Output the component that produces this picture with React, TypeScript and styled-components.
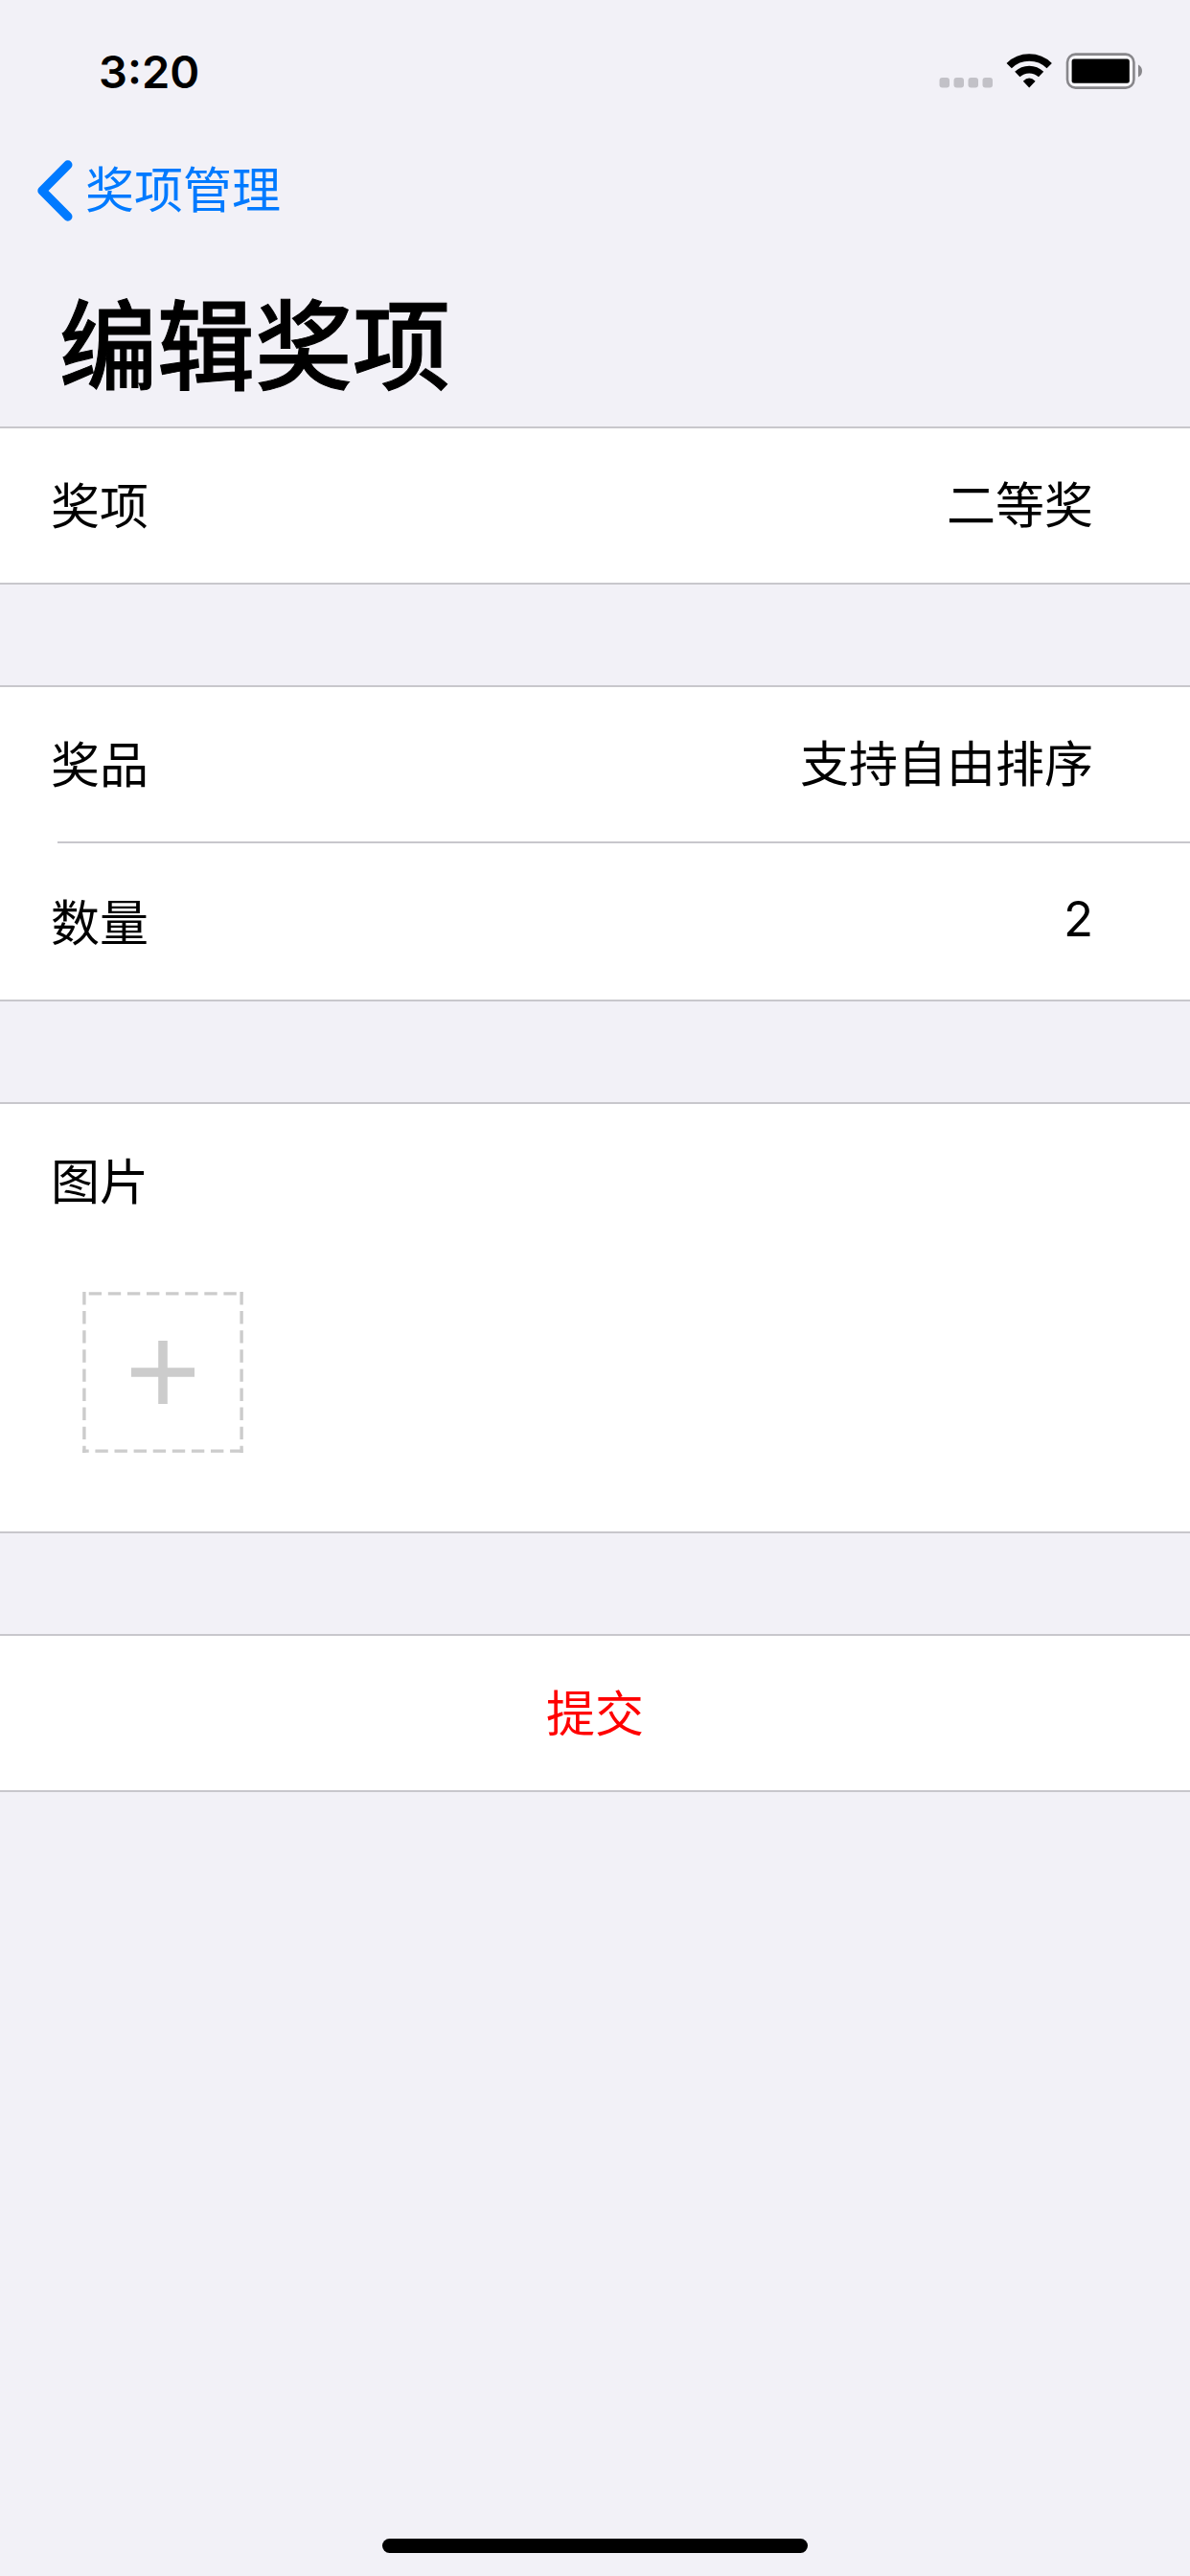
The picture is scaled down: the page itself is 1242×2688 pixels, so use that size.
import React, { useState } from "react";
import styled, { createGlobalStyle } from "styled-components";

const GlobalStyle = createGlobalStyle`
  *, *::before, *::after { box-sizing: border-box; }
  body {
    margin: 0;
    background: #f2f1f7;
    color: #000;
    font-family: Inter, "Noto Sans CJK SC", sans-serif;
    font-size: 51px;
    line-height: 72px;
  }
  button, input { font: inherit; color: inherit; }
`;

const Screen = styled.div`
  display: flex;
  flex-direction: column;
  min-height: 100vh;
`;

const StatusBar = styled.div`
  display: flex;
  align-items: center;
  justify-content: space-between;
  height: 132px;
  padding: 18px 49px 0 103px;
`;

const Time = styled.time`
  font-size: 47px;
  font-weight: 600;
`;

const StatusIcons = styled.svg`
  display: block;
  width: 216px;
  height: 40px;
`;

const NavBar = styled.nav`
  display: flex;
  align-items: center;
  height: 132px;
  padding: 2px 36px 0;
`;

const BackLink = styled.a`
  display: flex;
  align-items: center;
  gap: 11px;
  color: #007aff;
  text-decoration: none;
`;

const Chevron = styled.svg`
  display: block;
  width: 42px;
  height: 66px;
`;

const Title = styled.h1`
  margin: 0;
  padding: 26px 62px 11px;
  font-size: 102px;
  line-height: 144px;
  font-weight: 500;
  -webkit-text-stroke: 1px currentColor;
`;

const Form = styled.form`
  display: flex;
  flex-direction: column;
  gap: 105px;
`;

const Group = styled.section`
  border: solid #c8c7cc;
  border-width: 2px 0;
  background: #fff;
`;

const Row = styled.div`
  display: flex;
  align-items: center;
  height: 161px;
  padding: 2px 101px 0 53px;
`;

const Divider = styled.hr`
  height: 2px;
  margin: 0 0 2px 60px;
  border: 0;
  background: #c8c7cc;
`;

const Label = styled.label`
  flex: none;
`;

const RowTitle = styled.h2`
  margin: 0;
  font: inherit;
`;

const Input = styled.input`
  flex: 1;
  min-width: 0;
  height: 100px;
  padding: 0 0 10px;
  border: 0;
  outline: 0;
  background: transparent;
  text-align: right;
`;

const Pictures = styled.div`
  display: flex;
  padding: 35px 86px 82px;
`;

const AddButton = styled.button`
  width: 168px;
  height: 168px;
  padding: 0;
  border: 0;
  background: transparent;
  cursor: pointer;

  svg { display: block; }
`;

const SubmitButton = styled.button`
  display: block;
  width: 100%;
  height: 161px;
  padding: 2px 0 0;
  border: 0;
  background: transparent;
  color: #f00;
  cursor: pointer;
`;

const HomeArea = styled.footer`
  display: flex;
  justify-content: center;
  margin-top: auto;
  padding: 24px 0;
`;

const HomeIndicator = styled.div`
  width: 444px;
  height: 15px;
  border-radius: 8px;
  background: #000;
`;

function StatusGlyphs() {
  return (
    <StatusIcons viewBox="976 55 216 40" aria-hidden="true">
      {[979.5, 994.5, 1009.5, 1024.5].map((x) => (
        <rect key={x} x={x} y="81" width="10.5" height="10.5" rx="3" fill="#c2c1c7" />
      ))}
      <g fill="none" stroke="#000" strokeWidth="7.6">
        <path d="M1052.2 68.6A30 30 0 0 1 1094.2 68.6" />
        <path d="M1060.8 77.6A18 18 0 0 1 1085.6 77.6" />
      </g>
      <path d="M1073.2 91.4L1066.8 84.8Q1073.2 78.4 1079.6 84.8Z" fill="#000" />
      <rect x="1113" y="56.6" width="69.4" height="35" rx="8.5" fill="#fff" fillOpacity="0.4" stroke="#88878b" strokeWidth="2.6" />
      <rect x="1117.6" y="61.4" width="60.2" height="25.4" rx="2.5" fill="#000" />
      <path d="M1187 67.5Q1191 69.5 1191 74T1187 80.5Z" fill="#88878b" />
    </StatusIcons>
  );
}

function AddGlyph() {
  return (
    <svg width="168" height="168" viewBox="0 0 168 168" fill="none" stroke="#ccc" aria-hidden="true">
      <g strokeWidth="3.4" strokeDasharray="13.4 6.7">
        <path d="M1.9 0V168" />
        <path d="M166.1 0V168" />
        <path d="M0 1.9H168" strokeDashoffset="13.4" />
        <path d="M0 166.1H168" strokeDashoffset="6.7" />
      </g>
      <path d="M51 84H117M84 51V117" strokeWidth="9.6" />
    </svg>
  );
}

export default function App() {
  const [values, setValues] = useState({ award: "二等奖", prize: "支持自由排序", count: "2" });
  const change = (e: React.ChangeEvent<HTMLInputElement>) =>
    setValues({ ...values, [e.target.name]: e.target.value });

  return (
    <Screen>
      <GlobalStyle />
      <StatusBar>
        <Time>3:20</Time>
        <StatusGlyphs />
      </StatusBar>
      <NavBar>
        <BackLink href="#awards">
          <Chevron viewBox="36 165 42 66" aria-hidden="true">
            <path d="M70.8 171L44 198L70.8 225" fill="none" stroke="#007aff" strokeWidth="9.4" strokeLinecap="round" strokeLinejoin="round" />
          </Chevron>
          奖项管理
        </BackLink>
      </NavBar>
      <Title>编辑奖项</Title>
      <Form onSubmit={(e) => e.preventDefault()}>
        <Group>
          <Row>
            <Label htmlFor="award">奖项</Label>
            <Input id="award" name="award" value={values.award} onChange={change} />
          </Row>
        </Group>
        <Group>
          <Row>
            <Label htmlFor="prize">奖品</Label>
            <Input id="prize" name="prize" value={values.prize} onChange={change} />
          </Row>
          <Divider />
          <Row>
            <Label htmlFor="count">数量</Label>
            <Input id="count" name="count" inputMode="numeric" value={values.count} onChange={change} />
          </Row>
        </Group>
        <Group>
          <Row>
            <RowTitle>图片</RowTitle>
          </Row>
          <Pictures>
            <AddButton type="button" aria-label="添加图片">
              <AddGlyph />
            </AddButton>
          </Pictures>
        </Group>
        <Group>
          <SubmitButton type="submit">提交</SubmitButton>
        </Group>
      </Form>
      <HomeArea>
        <HomeIndicator />
      </HomeArea>
    </Screen>
  );
}
